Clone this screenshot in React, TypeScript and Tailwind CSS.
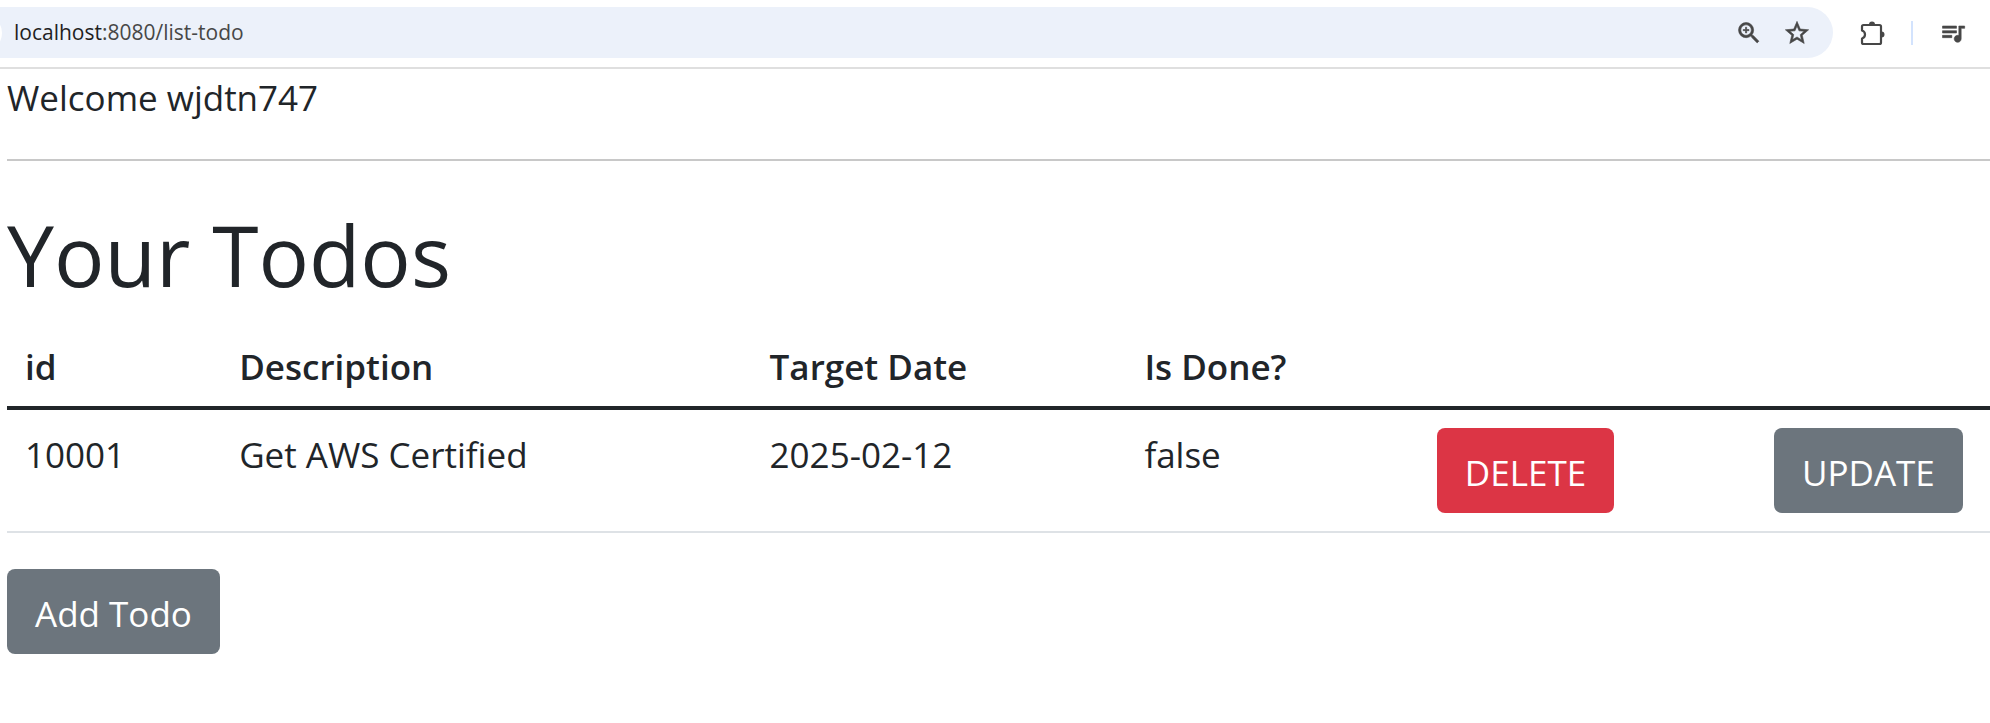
import React from "react";
import { MdOutlineZoomIn, MdQueueMusic, MdStarBorder } from "react-icons/md";

interface Todo {
  id: number;
  description: string;
  targetDate: string;
  done: boolean;
}

const todos: Todo[] = [
  {
    id: 10001,
    description: "Get AWS Certified",
    targetDate: "2025-02-12",
    done: false,
  },
];

const buttonBase =
  "inline-block h-[85px] rounded-lg px-7 pt-1 text-[35px]/[54px] text-white whitespace-nowrap";
const headCell = "px-[18px] pt-4 pb-3 font-semibold";
const bodyCell = "px-[18px] py-[18px]";
// slightly heavier than the stock Material outlines
const toolbarIcon = "size-7 [&>path:not([fill=none])]:stroke-[0.5]";

const ExtensionIcon: React.FC = () => (
  <svg
    viewBox="0 0 28 28"
    className="size-7"
    fill="none"
    stroke="currentColor"
    strokeWidth="2.2"
    strokeLinejoin="round"
  >
    <path d="M3 7.500Q3 6 4.500 6H20.500Q22 6 22 7.500V23.500Q22 25 20.500 25H4.500Q3 25 3 23.500V19.500Q6 18.500 6 15.500T3 11.500Z" />
    <path
      d="M10 5.500a3 3 0 0 1 6 0ZM22.500 12.500a3 3 0 0 1 0 6Z"
      fill="currentColor"
      stroke="none"
    />
  </svg>
);

const BrowserBar: React.FC = () => (
  <header className="flex items-center h-[69px] pt-[7px] pb-[9px] pr-[23px] border-b-2 border-[#dfdfdf] text-[#474747]">
    <div className="relative flex flex-1 items-center h-[51px] pl-3.5 pr-[22px] rounded-r-full bg-[#ecf1fa] overflow-hidden">
      <span className="absolute -left-[34px] size-9 rounded-full bg-white" />
      <p className="flex-1 text-[21px]">
        <span className="text-[#1f1f1f]">localhost</span>:8080/list-todo
      </p>
      <div className="flex gap-5">
        <button aria-label="Zoom">
          <MdOutlineZoomIn className={toolbarIcon} />
        </button>
        <button aria-label="Bookmark this tab">
          <MdStarBorder className={toolbarIcon} />
        </button>
      </div>
    </div>
    <button aria-label="Extensions" className="ml-[26px]">
      <ExtensionIcon />
    </button>
    <span className="ml-6 w-0.5 h-6 bg-[#d3e3fd]" />
    <button aria-label="Media controls" className="ml-[26px]">
      <MdQueueMusic className={toolbarIcon} />
    </button>
  </header>
);

const App: React.FC = () => {
  return (
    <div className="min-h-screen bg-white font-['Open_Sans','Noto_Sans',sans-serif] text-[#212529]">
      <BrowserBar />

      <main className="pt-0.5 pl-[7px] text-[35px]/[54px]">
        <p>Welcome wjdtn747</p>
        <hr className="mt-[34px] mb-10 border-t-2 border-[#c8c8c8]" />

        <h1 className="text-[84px]/[108px]">Your Todos</h1>

        <table className="mt-[15px] w-full table-fixed text-left">
          <colgroup>
            <col className="w-[10.8%]" />
            <col className="w-[26.75%]" />
            <col className="w-[18.9%]" />
            <col className="w-[14.75%]" />
            <col className="w-[17%]" />
            <col />
          </colgroup>
          <thead>
            <tr className="border-b-4 border-[#212529]">
              <th className={headCell}>id</th>
              <th className={headCell}>Description</th>
              <th className={headCell}>Target Date</th>
              <th className={headCell}>Is Done?</th>
              <th />
              <th />
            </tr>
          </thead>
          <tbody>
            {todos.map((todo) => (
              <tr key={todo.id} className="border-b-2 border-[#dee2e6] align-top">
                <td className={bodyCell}>{todo.id}</td>
                <td className={bodyCell}>{todo.description}</td>
                <td className={bodyCell}>{todo.targetDate}</td>
                <td className={bodyCell}>{String(todo.done)}</td>
                <td className={bodyCell}>
                  <button className={`${buttonBase} bg-[#dc3545]`}>DELETE</button>
                </td>
                <td className={bodyCell}>
                  <button className={`${buttonBase} bg-[#6c757d]`}>UPDATE</button>
                </td>
              </tr>
            ))}
          </tbody>
        </table>

        <button className={`${buttonBase} mt-9 bg-[#6c757d]`}>Add Todo</button>
      </main>
    </div>
  );
};

export default App;
